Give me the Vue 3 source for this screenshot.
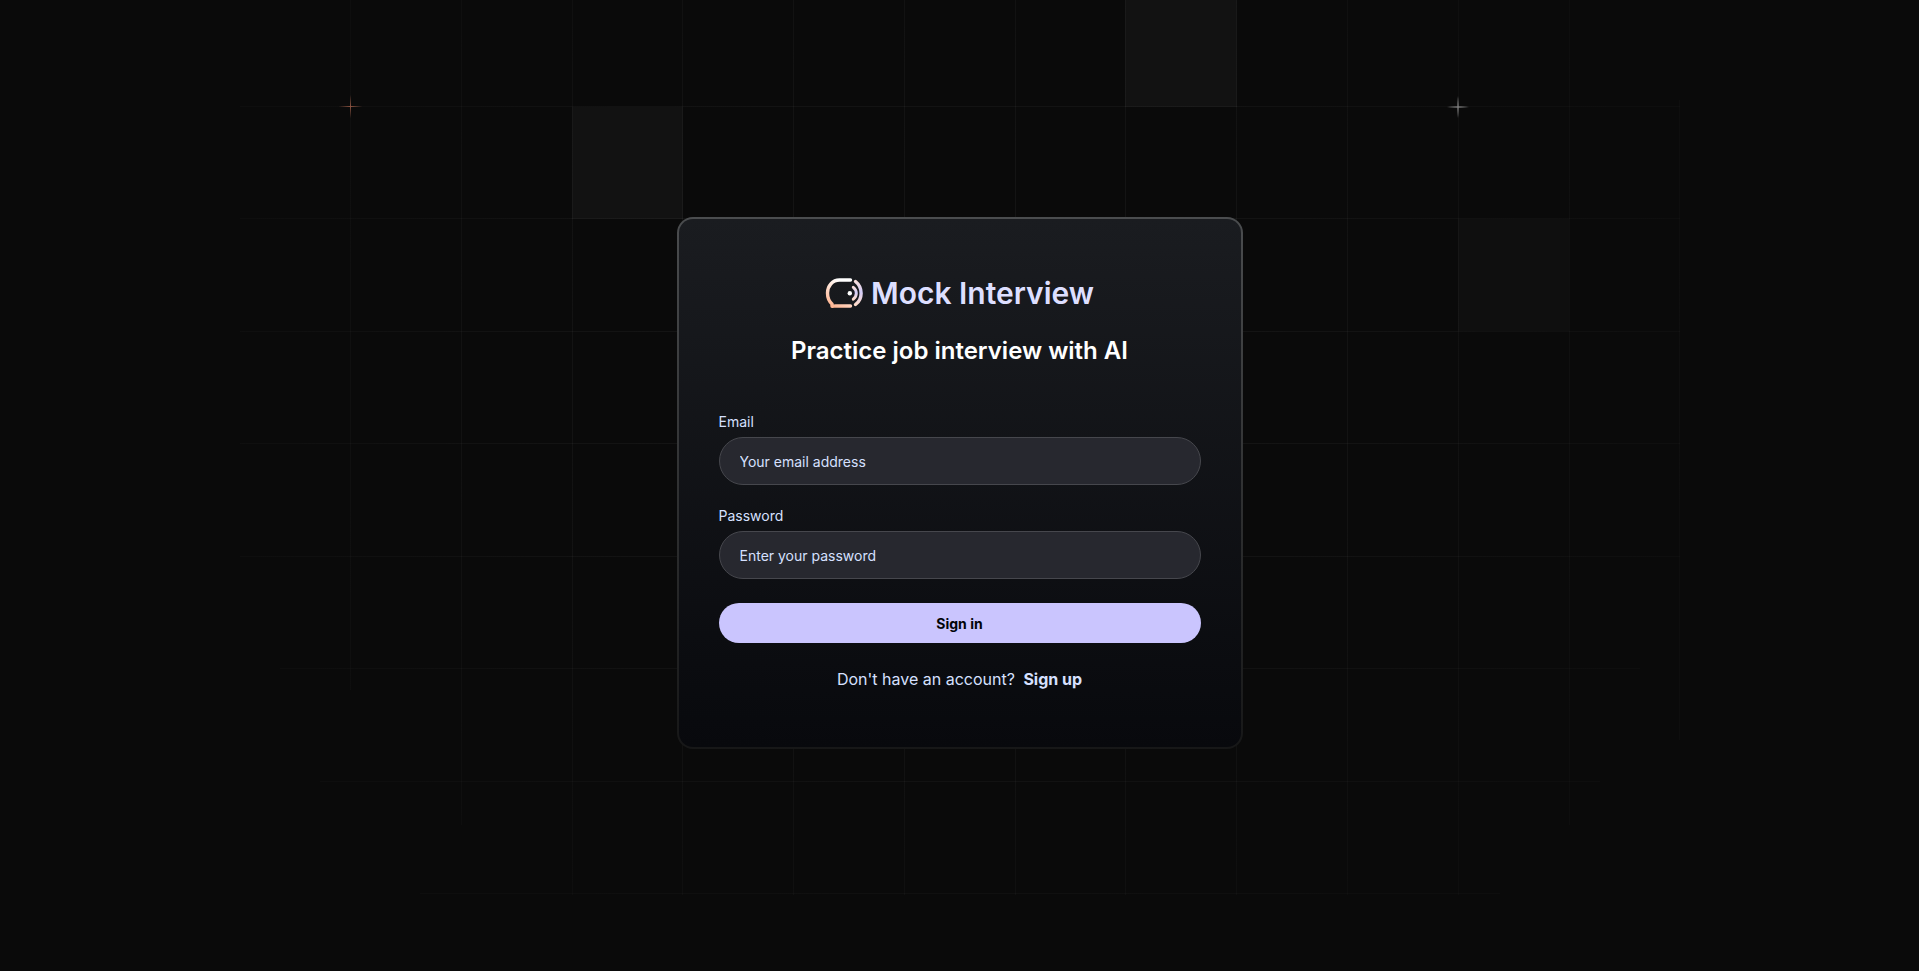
<script setup>
import { ref } from 'vue'

const email = ref('')
const password = ref('')

const columns = [
  { x: 350, top: 0, bottom: 690 },
  { x: 461, top: 0, bottom: 825 },
  { x: 572, top: 0, bottom: 895 },
  { x: 682, top: 0, bottom: 895 },
  { x: 793, top: 0, bottom: 895 },
  { x: 904, top: 0, bottom: 895 },
  { x: 1015, top: 0, bottom: 895 },
  { x: 1125, top: 0, bottom: 895 },
  { x: 1236, top: 0, bottom: 895 },
  { x: 1347, top: 0, bottom: 895 },
  { x: 1458, top: 0, bottom: 895 },
  { x: 1569, top: 0, bottom: 825 },
  { x: 1679, top: 100, bottom: 740 },
]
const rows = [
  { y: 106, left: 240, right: 1680 },
  { y: 218, left: 240, right: 1680 },
  { y: 331, left: 240, right: 1680 },
  { y: 443, left: 240, right: 1680 },
  { y: 556, left: 240, right: 1680 },
  { y: 668, left: 280, right: 1640 },
  { y: 781, left: 320, right: 1600 },
  { y: 893, left: 420, right: 1500 },
]
</script>

<template>
  <main class="page">
    <svg class="backdrop" viewBox="0 0 1919 971" preserveAspectRatio="xMidYMid slice" aria-hidden="true">
      <defs>
        <radialGradient id="fade" gradientUnits="userSpaceOnUse" cx="960" cy="380" r="740" gradientTransform="translate(0 80) scale(1 0.8)">
          <stop offset="0" stop-color="#fff" stop-opacity="0.05" />
          <stop offset="0.6" stop-color="#fff" stop-opacity="0.035" />
          <stop offset="1" stop-color="#fff" stop-opacity="0.018" />
        </radialGradient>
        <radialGradient id="warm">
          <stop offset="0" stop-color="#8a5240" />
          <stop offset="1" stop-color="#8a5240" stop-opacity="0" />
        </radialGradient>
        <radialGradient id="cool">
          <stop offset="0" stop-color="#808080" />
          <stop offset="1" stop-color="#808080" stop-opacity="0" />
        </radialGradient>
      </defs>
      <rect x="1125" y="0" width="112" height="107" fill="#121212" />
      <rect x="572" y="107" width="111" height="112" fill="#121212" />
      <rect x="1458" y="219" width="111" height="112" fill="#0f0f0f" />
      <g fill="url(#fade)">
        <rect v-for="c in columns" :key="c.x" :x="c.x" :y="c.top" width="1" :height="c.bottom - c.top" />
        <rect v-for="r in rows" :key="r.y" :x="r.left" :y="r.y" :width="r.right - r.left" height="1" />
      </g>
      <ellipse cx="350.5" cy="106.5" rx="12" ry="1" fill="url(#warm)" />
      <ellipse cx="350.5" cy="106.5" rx="1" ry="12" fill="url(#warm)" />
      <ellipse cx="1458" cy="107" rx="12" ry="1.5" fill="url(#cool)" />
      <ellipse cx="1458" cy="107" rx="1.5" ry="12" fill="url(#cool)" />
    </svg>

    <section class="card">
      <header class="brand">
        <svg class="logo" viewBox="0 0 38 32" aria-hidden="true">
          <defs>
            <linearGradient id="head" x1="0.75" y1="0" x2="0.2" y2="1">
              <stop offset="0.1" stop-color="#fff" />
              <stop offset="1" stop-color="#ffb592" />
            </linearGradient>
            <linearGradient id="wave" x1="0" y1="0" x2="0" y2="1">
              <stop offset="0" stop-color="#f7dcdc" />
              <stop offset="0.45" stop-color="#d2ccf8" />
              <stop offset="1" stop-color="#ffdccb" />
            </linearGradient>
          </defs>
          <g fill="none" stroke-width="3.4" stroke-linecap="round" stroke-linejoin="round">
            <path d="M25.5 3H14.500C7.500 3 2.500 9 2.500 16C2.500 20.500 4 24.300 7 27V29.300C8.500 29.300 9 29 10.500 29H25.500" stroke="url(#head)" />
            <path d="M30.500 4.500C38 10.500 38 22 30.500 27.500" stroke="url(#wave)" />
            <path d="M28.300 10.300C32.300 13.500 32.300 19 28.300 22.200" stroke="url(#wave)" stroke-width="3" />
          </g>
          <circle cx="24.800" cy="16.300" r="2.200" fill="#fff" />
        </svg>
        <h1>Mock Interview</h1>
      </header>
      <h2>Practice job interview with AI</h2>

      <form @submit.prevent>
        <div class="field">
          <label for="email">Email</label>
          <input id="email" v-model="email" type="email" placeholder="Your email address" />
        </div>
        <div class="field">
          <label for="password">Password</label>
          <input id="password" v-model="password" type="password" placeholder="Enter your password" />
        </div>
        <button type="submit">Sign in</button>
      </form>

      <p class="signup">Don't have an account? <a href="#sign-up">Sign up</a></p>
    </section>
  </main>
</template>

<style>
body {
  background: #0a0a0a;
}
</style>

<style scoped>
.page {
  position: relative;
  display: flex;
  align-items: center;
  justify-content: center;
  box-sizing: border-box;
  min-height: 100vh;
  padding-bottom: 5px;
  overflow: hidden;
  border-bottom: 1px solid #fff;
  background: #0a0a0a;
  color: #d6e0ff;
  font-family: Inter, "Liberation Sans", sans-serif;
}

.backdrop {
  position: absolute;
  inset: 0;
  width: 100%;
  height: 100%;
}

.card {
  position: relative;
  box-sizing: border-box;
  width: 100%;
  max-width: 566px;
  padding: 56px 40px;
  border: 2px solid transparent;
  border-radius: 16px;
  background:
    linear-gradient(#1a1c20, #08090d) padding-box,
    linear-gradient(#4b4d4f, #4b4d4f33) border-box,
    #0a0a0a;
}

.brand {
  display: flex;
  align-items: center;
  justify-content: center;
  gap: 8px;
}

.logo {
  width: 38px;
  height: 32px;
}

h1,
h2,
p {
  margin: 0;
}

h1 {
  color: #dddfff;
  font-size: 30px;
  font-weight: 600;
  line-height: 36px;
}

h2 {
  margin-top: 24px;
  color: #fff;
  font-size: 24px;
  font-weight: 600;
  line-height: 32px;
  text-align: center;
}

form {
  display: flex;
  flex-direction: column;
  gap: 24px;
  margin-top: 48px;
}

.field {
  display: flex;
  flex-direction: column;
  gap: 8px;
}

label {
  font-size: 14px;
  line-height: 14px;
}

input {
  box-sizing: border-box;
  width: 100%;
  height: 48px;
  padding: 0 20px;
  border: 1px solid #46474d;
  border-radius: 24px;
  outline: none;
  background: #27282f;
  color: #d6e0ff;
  font: inherit;
  font-size: 14px;
}

input::placeholder {
  color: #d6e0ff;
  opacity: 1;
}

button {
  height: 40px;
  border: 0;
  border-radius: 20px;
  background: #cac5fe;
  color: #020408;
  font: inherit;
  font-size: 14px;
  font-weight: 700;
  cursor: pointer;
}

.signup {
  margin-top: 24px;
  font-size: 16px;
  line-height: 24px;
  text-align: center;
}

.signup a {
  margin-left: 4px;
  color: #d6e0ff;
  font-weight: 700;
  text-decoration: none;
}
</style>
